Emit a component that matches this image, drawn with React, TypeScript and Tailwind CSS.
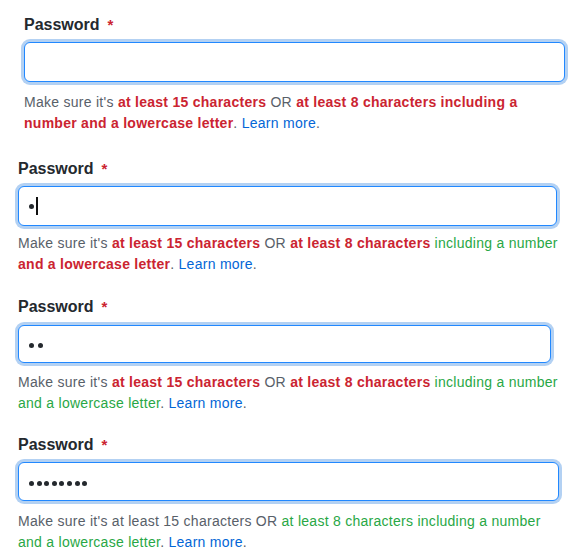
import React from "react";

const R = "text-[#cb2431] font-bold";
const G = "text-[#28a745]";

function Dots({ n, gap }: { n: number; gap: string }) {
  return (
    <div className={`flex items-center ${gap}`}>
      {Array.from({ length: n }).map((_, i) => (
        <span key={i} className="block w-[5px] h-[5px] rounded-full bg-[#24292e]" />
      ))}
    </div>
  );
}

function Label() {
  return (
    <div className="text-[16px] leading-[24px] font-bold text-[#24292e]">
      Password<span className="text-[#cb2431] ml-[8px] text-[15px]">*</span>
    </div>
  );
}

const inputCls =
  "rounded-[6px] border border-[#2188ff] bg-white shadow-[0_0_0_3px_rgba(3,102,214,0.3)] flex items-center pl-[10px]";

const helpCls = "text-[14px] leading-[21px] text-[#586069] whitespace-nowrap tracking-[0.27px]";

const Link = () => <span className="text-[#0366d6]">Learn more</span>;

export default function App() {
  return (
    <div
      className="w-[575px] h-[560px] bg-white overflow-hidden"
      style={{ fontFamily: '"Liberation Sans", Arial, sans-serif' }}
    >
      {/* Block 1 */}
      <div className="ml-[24px] w-[541px] pt-[13px]">
        <Label />
        <div className={`${inputCls} mt-[5px] h-[40px]`} />
        <div className={`${helpCls} mt-[10px]`}>
          Make sure it's <span className={R}>at least 15 characters</span> OR{" "}
          <span className={R}>at least 8 characters including a</span>
          <br />
          <span className={R}>number and a lowercase letter</span>. <Link />.
        </div>
      </div>

      {/* Block 2 */}
      <div className="ml-[18px] w-[539px] mt-[23px]">
        <Label />
        <div className={`${inputCls} mt-[5px] h-[40px]`}>
          <span className="block w-[5px] h-[5px] rounded-full bg-[#24292e] mt-[1px]" />
          <span className="block w-[1.5px] h-[18px] bg-[#111] ml-[2px]" />
        </div>
        <div className={`${helpCls} mt-[7px]`}>
          Make sure it's <span className={R}>at least 15 characters</span> OR{" "}
          <span className={R}>at least 8 characters</span>{" "}
          <span className={G}>including a number</span>
          <br />
          <span className={R}>and a lowercase letter</span>. <Link />.
        </div>
      </div>

      {/* Block 3 */}
      <div className="ml-[18px] w-[533px] mt-[20px]">
        <Label />
        <div className={`${inputCls} mt-[6px] h-[38px]`}>
          <div className="mt-[2px]">
            <Dots n={2} gap="gap-[4px]" />
          </div>
        </div>
        <div className={`${helpCls} mt-[9px]`}>
          Make sure it's <span className={R}>at least 15 characters</span> OR{" "}
          <span className={R}>at least 8 characters</span>{" "}
          <span className={G}>including a number</span>
          <br />
          <span className={G}>and a lowercase letter</span>. <Link />.
        </div>
      </div>

      {/* Block 4 */}
      <div className="ml-[18px] w-[541px] mt-[19px]">
        <Label />
        <div className={`${inputCls} mt-[5px] h-[39px]`}>
          <div className="mt-[3px]">
            <Dots n={8} gap="gap-[2.6px]" />
          </div>
        </div>
        <div className={`${helpCls} mt-[10px]`}>
          Make sure it's at least 15 characters OR{" "}
          <span className={G}>at least 8 characters including a number</span>
          <br />
          <span className={G}>and a lowercase letter</span>. <Link />.
        </div>
      </div>
    </div>
  );
}
